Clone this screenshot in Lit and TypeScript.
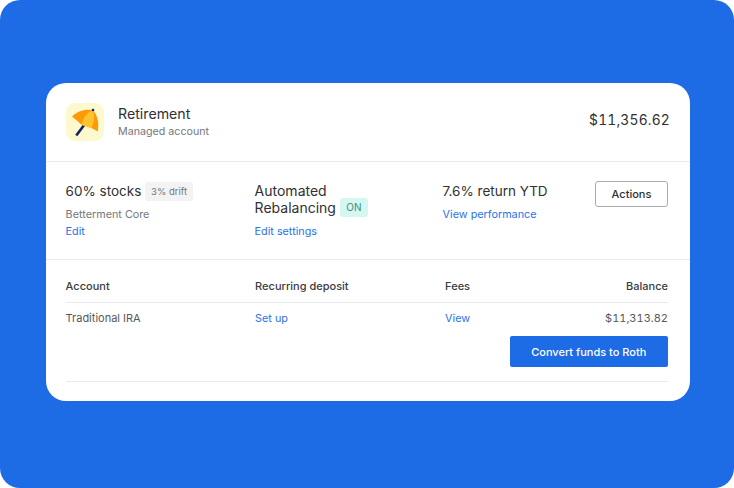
import { LitElement, html, css } from 'lit';
import { customElement } from 'lit/decorators.js';

const umbrella = html`<svg width="38" height="38" viewBox="0 0 38 38">
  <rect width="38" height="38" rx="9" fill="#fdf9cf"/>
  <path d="M10.3 32.5 L18.5 21.5" stroke="#12245c" stroke-width="2.6" fill="none"/>
  <path d="M6 13.5 C11 8.5 20 5.5 27 7.5 C32 12 33.2 21 31.7 28.5 L25.5 25 L16 22 Z" fill="#fd9a09"/>
  <path d="M16 22 C16.5 15 21 9 27 7.5 C29 13 28 20 25.5 25 Z" fill="#fec42f"/>
  <circle cx="27" cy="7" r="1.3" fill="#12245c"/>
</svg>`;

@customElement('app-root')
export class AppRoot extends LitElement {
  static styles = css`
    :host {
      display: block;
      font-family: Inter, "Noto Sans", sans-serif;
      color: #2f3133;
      background: #fff;
    }
    .page {
      width: 734px;
      height: 488px;
      box-sizing: border-box;
      background: #1e6be6;
      border-radius: 20px;
      padding: 83px 0 0 46px;
    }
    .card {
      width: 644px;
      height: 318px;
      box-sizing: border-box;
      background: #fff;
      border-radius: 20px;
      display: flex;
      flex-direction: column;
    }
    .head {
      height: 79px;
      flex: none;
      box-sizing: border-box;
      padding: 0 20px;
      display: flex;
      align-items: center;
      gap: 14px;
      border-bottom: 1px solid #e9eaec;
    }
    .head svg { display: block; flex: none; }
    .name { font-size: 14.2px; line-height: 18px; }
    .sub { font-size: 10.7px; line-height: 16px; color: #75787d; margin-top: 1px; }
    .total {
      margin: 0 0 4px auto;
      font-size: 13.8px;
      letter-spacing: 0.2px;
      font-variant-numeric: tabular-nums;
    }
    .summary {
      height: 98px;
      flex: none;
      box-sizing: border-box;
      padding: 21px 22px 0 19.6px;
      display: grid;
      grid-template-columns: 189px 188px 152px 1fr;
      border-bottom: 1px solid #e9eaec;
    }
    .big { font-size: 13.5px; line-height: 17.5px; }
    .big.two { font-size: 14px; line-height: 17px; margin-top: -1px; }
    .tag {
      display: inline-block;
      font-size: 9.5px;
      line-height: 19px;
      margin-block: -3px;
      padding: 0 6px;
      border-radius: 3px;
      background: #f3f3f3;
      color: #74777b;
      vertical-align: 1px;
    }
    .tag.on {
      background: #d5f7f2;
      color: #3f8a80;
      font-size: 10px;
      padding: 0 6.5px;
      vertical-align: 2px;
    }
    .desc { font-size: 10.8px; line-height: 16px; color: #75787d; margin-top: 6.5px; }
    a { color: #2a72e8; text-decoration: none; font-size: 10.8px; line-height: 16px; display: block; }
    .desc + a { margin-top: 1px; }
    .big + a { margin-top: 6.5px; }
    .big.two + a { margin-top: 8px; }
    .actions {
      justify-self: end;
      width: 73px;
      height: 26px;
      box-sizing: border-box;
      margin-top: -2px;
      border: 1px solid #a9abae;
      border-radius: 3px;
      background: #fff;
      font: 500 11px Inter, sans-serif;
      color: #2f3133;
      padding: 0;
    }
    .table { padding: 0 22px 0 19.6px; flex: 1; }
    .row {
      display: grid;
      grid-template-columns: 189.5px 190px 1fr 1fr;
      align-items: center;
    }
    .row.th {
      height: 43px;
      box-sizing: border-box;
      padding-top: 10px;
      font-size: 11px;
      font-weight: 500;
      color: #3a3c3f;
      border-bottom: 1px solid #e9eaec;
    }
    .row.td { grid-template-rows: 30px; font-size: 11px; color: #55585c; }
    .row a { line-height: 28px; height: 30px; box-sizing: border-box; padding-top: 2px; font-size: 10.8px; }
    .end { text-align: right; font-variant-numeric: tabular-nums; }
    .foot {
      display: flex;
      justify-content: flex-end;
      padding: 3px 0 14px;
      border-bottom: 1px solid #e9eaec;
    }
    .convert {
      width: 158.5px;
      height: 31px;
      border: none;
      border-radius: 2px;
      background: #1e6be6;
      color: #fff;
      font: 500 11px Inter, sans-serif;
      padding: 0;
    }
  `;

  render() {
    return html`<div class="page">
      <div class="card">
        <div class="head">
          ${umbrella}
          <div>
            <div class="name">Retirement</div>
            <div class="sub">Managed account</div>
          </div>
          <div class="total">$11,356.62</div>
        </div>
        <div class="summary">
          <div>
            <div class="big">60% stocks <span class="tag">3% drift</span></div>
            <div class="desc">Betterment Core</div>
            <a>Edit</a>
          </div>
          <div>
            <div class="big two">Automated<br />Rebalancing <span class="tag on">ON</span></div>
            <a>Edit settings</a>
          </div>
          <div>
            <div class="big">7.6% return YTD</div>
            <a>View performance</a>
          </div>
          <button class="actions">Actions</button>
        </div>
        <div class="table">
          <div class="row th">
            <div>Account</div><div>Recurring deposit</div><div>Fees</div><div class="end">Balance</div>
          </div>
          <div class="row td">
            <div>Traditional IRA</div><a>Set up</a><a>View</a><div class="end">$11,313.82</div>
          </div>
          <div class="foot"><button class="convert">Convert funds to Roth</button></div>
        </div>
      </div>
    </div>`;
  }
}
